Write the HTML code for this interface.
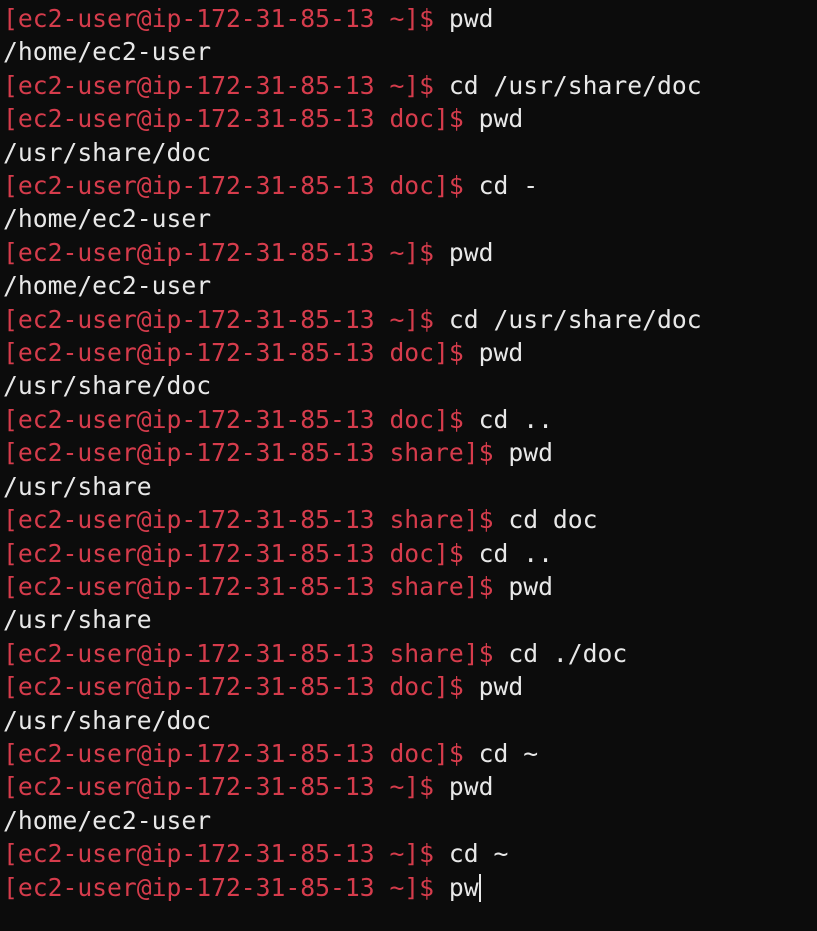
<!DOCTYPE html><html><head><style>
body{margin:0;background:#0c0c0c;width:817px;height:931px;overflow:hidden}
pre{margin:0;position:absolute;left:3px;top:2px;font-family:"DejaVu Sans Mono","Liberation Mono",monospace;font-size:24.7px;line-height:33.4px;color:#e8e8e8;letter-spacing:0}
.r{color:#d63c4c}
.c{display:inline-block;width:2px;height:28px;background:#e8e8e8;vertical-align:-6px}
</style></head><body><pre><span class="r">[ec2-user@ip-172-31-85-13 ~]$</span> pwd
/home/ec2-user
<span class="r">[ec2-user@ip-172-31-85-13 ~]$</span> cd /usr/share/doc
<span class="r">[ec2-user@ip-172-31-85-13 doc]$</span> pwd
/usr/share/doc
<span class="r">[ec2-user@ip-172-31-85-13 doc]$</span> cd -
/home/ec2-user
<span class="r">[ec2-user@ip-172-31-85-13 ~]$</span> pwd
/home/ec2-user
<span class="r">[ec2-user@ip-172-31-85-13 ~]$</span> cd /usr/share/doc
<span class="r">[ec2-user@ip-172-31-85-13 doc]$</span> pwd
/usr/share/doc
<span class="r">[ec2-user@ip-172-31-85-13 doc]$</span> cd ..
<span class="r">[ec2-user@ip-172-31-85-13 share]$</span> pwd
/usr/share
<span class="r">[ec2-user@ip-172-31-85-13 share]$</span> cd doc
<span class="r">[ec2-user@ip-172-31-85-13 doc]$</span> cd ..
<span class="r">[ec2-user@ip-172-31-85-13 share]$</span> pwd
/usr/share
<span class="r">[ec2-user@ip-172-31-85-13 share]$</span> cd ./doc
<span class="r">[ec2-user@ip-172-31-85-13 doc]$</span> pwd
/usr/share/doc
<span class="r">[ec2-user@ip-172-31-85-13 doc]$</span> cd ~
<span class="r">[ec2-user@ip-172-31-85-13 ~]$</span> pwd
/home/ec2-user
<span class="r">[ec2-user@ip-172-31-85-13 ~]$</span> cd ~
<span class="r">[ec2-user@ip-172-31-85-13 ~]$</span> pw<span class="c"></span></pre></body></html>
